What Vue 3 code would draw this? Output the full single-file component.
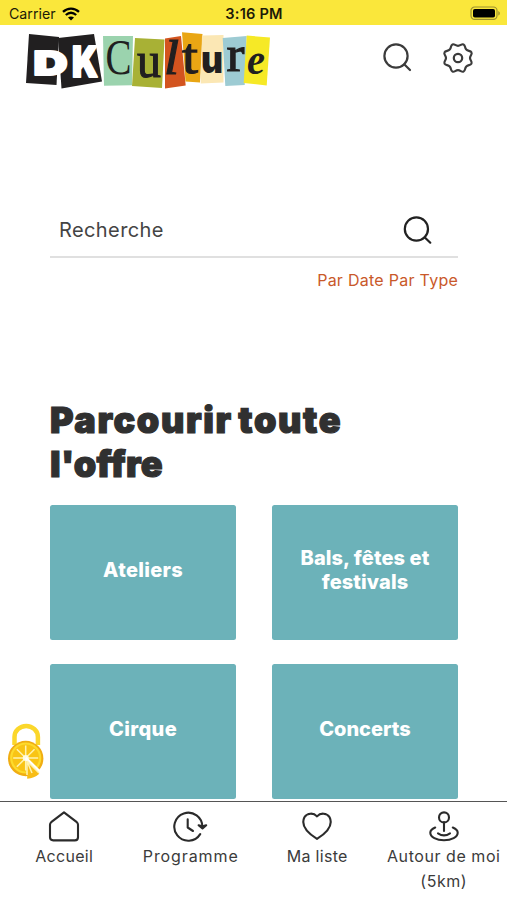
<script setup>
import { ref } from "vue";

const search = ref("");

const categories = [
  { id: 1, label: "Ateliers", cls: "ateliers" },
  { id: 2, label: "Bals, fêtes et festivals", cls: "bals" },
  { id: 3, label: "Cirque", cls: "cirque" },
  { id: 4, label: "Concerts", cls: "concerts" },
];

const tabs = [
  { icon: "home", label: "Accueil" },
  { icon: "clock", label: "Programme" },
  { icon: "heart", label: "Ma liste" },
  { icon: "pin", label: "Autour de moi (5km)" },
];

// citrus segments, in degrees
const segments = [0, 45, 90, 135, 180, 225, 270, 315];
</script>

<template>
  <div class="app">
    <div class="status-bar">
      <div class="carrier">
        <span>Carrier</span>
        <svg width="18" height="14" viewBox="0 0 18 14">
          <path d="M1 4.8C5.6.5 12.4.5 17 4.8" />
          <path d="M3.8 8C7 5.2 11 5.2 14.2 8" />
          <path class="dot" d="M9 13.6L6 10.6C7.8 9.2 10.2 9.2 12 10.6Z" />
        </svg>
      </div>
      <span class="time">3:16 PM</span>
      <svg class="battery" width="31" height="15" viewBox="0 0 31 15">
        <rect class="shell" x="1" y="1" width="26" height="12.4" rx="3.6" />
        <rect x="3" y="3" width="22" height="8.6" rx="1.8" />
        <path class="cap" d="M28.3 5v4.6c2-.8 2-3.8 0-4.6z" />
      </svg>
    </div>

    <header class="header">
      <svg class="logo" width="247" height="65" viewBox="25 25 247 65">
        <path fill="#211f20" d="M29 34L59 37L56.5 85L26 83Z" />
        <path fill="#211f20" d="M58 38L94 34L102 81.5L61.5 88.5Z" />
        <path fill="#9bd3ae" d="M103 36L133 36L132 85.3L104 85.7Z" />
        <path fill="#a8b135" d="M135 38L164.5 39.5L162 88L132 86Z" />
        <path fill="#d3541f" d="M165 38.5L181 36L185.7 85.5L165 88.5Z" />
        <path fill="#e9a614" d="M182 32.3L202.5 34L200 82.5L185.5 81.5Z" />
        <path fill="#fbe7b4" d="M202 35.5L223.5 35L223.5 82.5L200.7 83.5Z" />
        <path fill="#9dcbd3" d="M222.7 38L246.7 36L244.7 85L225.3 86Z" />
        <path fill="#f6e926" d="M246.7 35.5L270 37.5L266.7 85.5L243.7 83Z" />
        <text class="block" x="33.5" y="74.5" font-size="33" textLength="34" lengthAdjust="spacingAndGlyphs">D</text>
        <text class="block" x="72" y="77" font-size="42" textLength="26" lengthAdjust="spacingAndGlyphs">K</text>
        <text class="serif" x="105.5" y="74" font-size="51" textLength="26" lengthAdjust="spacingAndGlyphs">C</text>
        <text class="serif thick" x="137" y="77" font-size="50" textLength="24" lengthAdjust="spacingAndGlyphs">u</text>
        <text class="serif thick italic" x="164" y="73.5" font-size="49" textLength="15" lengthAdjust="spacingAndGlyphs">l</text>
        <text class="serif thick" x="182" y="72.5" font-size="51" textLength="16" lengthAdjust="spacingAndGlyphs">t</text>
        <text class="sans" x="201" y="73" font-size="38" textLength="22" lengthAdjust="spacingAndGlyphs">u</text>
        <text class="serif thick" x="226.5" y="71" font-size="51" textLength="18" lengthAdjust="spacingAndGlyphs">r</text>
        <text class="serif bold italic" x="247" y="74" font-size="45" textLength="18" lengthAdjust="spacingAndGlyphs">e</text>
      </svg>
      <div class="actions">
        <svg width="30" height="30" viewBox="0 0 30 30">
          <circle cx="13" cy="13" r="11.6" />
          <path d="M21.2 21.2L27 27" />
        </svg>
        <svg width="32" height="32" viewBox="0 0 32 32">
          <circle cx="16" cy="16" r="4.2" />
          <path
            d="M10.5 2.4C12.3 1.5 13.5 3.9 16 3.9S19.7 1.5 21.5 2.4C23.6 3.4 22.5 5.7 24.3 7.6C26 9.4 28.5 8.3 29.5 10.4C30.5 12.3 28 13.5 28 16S30.5 19.7 29.5 21.6C28.5 23.7 26 22.6 24.3 24.4C22.5 26.3 23.6 28.6 21.5 29.6C19.7 30.5 18.5 28.1 16 28.1S12.3 30.5 10.5 29.6C8.4 28.6 9.5 26.3 7.7 24.4C6 22.6 3.5 23.7 2.5 21.6C1.5 19.7 4 18.5 4 16S1.5 12.3 2.5 10.4C3.5 8.3 6 9.4 7.7 7.6C9.5 5.7 8.4 3.4 10.5 2.4Z"
          />
        </svg>
      </div>
    </header>

    <main class="content">
      <div class="search-box">
        <input v-model="search" type="text" placeholder="Recherche" />
        <svg width="30" height="30" viewBox="0 0 30 30">
          <circle cx="13.4" cy="14" r="11.6" />
          <path d="M21.6 22.2L27.3 27.7" />
        </svg>
      </div>

      <div class="filters">
        <a>Par Date</a>
        <a>Par Type</a>
      </div>

      <h1><span class="line-one">Parcourir toute</span><br /><span class="line-two">l'offre</span></h1>

      <div class="grid">
        <div v-for="cat in categories" :key="cat.id" class="card">
          <span :class="cat.cls">{{ cat.label }}</span>
        </div>
      </div>
    </main>

    <!-- cookie settings -->
    <svg class="cookie" width="40" height="58" viewBox="0 0 40 58">
      <path class="shackle" d="M7.5 22V14a11.7 11 0 0 1 23.4 0V22" />
      <circle cx="18.7" cy="35.5" r="17.7" fill="#f0ad12" />
      <circle cx="18.7" cy="35" r="15.6" fill="#fddb2c" />
      <circle cx="18.7" cy="35" r="13.4" fill="#f9c414" />
      <path
        v-for="deg in segments"
        :key="deg"
        class="segment"
        d="M18.7 35V22.5"
        :transform="`rotate(${deg} 18.7 35)`"
      />
      <circle cx="18.7" cy="35" r="3" fill="#fffbe0" />
      <path class="cut" d="M18.7 35L34 50" />
      <path d="M20 38L32.3 50.7A19 19 0 0 1 20.2 55.7Z" fill="#f8bd16" />
      <path class="segment" d="M20 38L32 50M20 38V52M20 38L25 50" />
    </svg>

    <nav class="tab-bar">
      <a v-for="tab in tabs" :key="tab.label" class="tab" :class="tab.icon">
        <svg width="36" height="32" viewBox="0 0 36 32">
          <template v-if="tab.icon === 'home'">
            <path
              d="M18 1.3L30.8 11.2Q32 12.2 32 13.7V26.2Q32 29.4 28.8 29.4H7.2Q4 29.4 4 26.2V13.7Q4 12.2 5.2 11.2Z"
            />
          </template>
          <template v-else-if="tab.icon === 'clock'">
            <path d="M27.2 23.1A14 14 0 1 1 29.3 16" />
            <path class="arrow" d="M25.6 14.2L29.5 17.5L33.2 14.2L29.5 15.2Z" />
            <path d="M14.7 8.4V16.5L20 20" />
          </template>
          <template v-else-if="tab.icon === 'heart'">
            <path
              d="M18 5.4C14.5 1.5 8.2 1.8 5.4 6.2C1.8 13.8 8 21.7 18 27.9C28 21.7 34.2 13.8 30.6 6.2C27.8 1.8 21.5 1.5 18 5.4Z"
            />
          </template>
          <template v-else>
            <circle cx="18" cy="6.4" r="5" />
            <path d="M18 11.4V20" />
            <path d="M9.2 16.5C6.4 17.7 4.3 19.4 4.3 21.7C4.3 26 10.5 29.2 18 29.2S31.7 26 31.7 21.7C31.7 19.4 29.6 17.7 26.8 16.5" />
            <path d="M12 22.3Q18 26.4 24 22.3" />
          </template>
        </svg>
        <span>{{ tab.label }}</span>
      </a>
    </nav>
  </div>
</template>

<style>
body {
  margin: 0;
  background: #fff;
}
</style>

<style scoped>
.app {
  position: relative;
  display: flex;
  flex-direction: column;
  height: 900px;
  overflow: hidden;
  background: #fff;
  color: #303030;
  font-family: "Inter", "Open Sans", sans-serif;
}

.status-bar {
  display: grid;
  grid-template-columns: 1fr auto 1fr;
  align-items: center;
  flex: none;
  height: 25px;
  padding: 2px 6px 0 9px;
  box-sizing: border-box;
  background: #fae73b;
  color: #1c1a08;
  font-size: 14.2px;
}

.carrier {
  display: flex;
  align-items: center;
  gap: 6px;
}

.carrier path {
  fill: none;
  stroke: #000;
  stroke-width: 2.3;
}

.carrier .dot {
  fill: #000;
  stroke: none;
}

.time {
  font-size: 14.6px;
  font-weight: 600;
  letter-spacing: 0.2px;
  margin-right: 2px;
}

.battery {
  justify-self: end;
}

.battery .shell {
  fill: none;
  stroke: #9c9130;
  stroke-width: 1.2;
}

.battery .cap {
  fill: #9c9130;
}

.header {
  display: flex;
  justify-content: space-between;
  align-items: flex-start;
  flex: none;
  height: 65px;
  padding: 0 33px 0 25px;
  box-sizing: border-box;
}

.logo text {
  fill: #211f20;
}

.logo .block {
  fill: #fff;
  stroke: #fff;
  stroke-width: 2;
  stroke-linejoin: round;
  font-weight: 900;
}

.logo .serif {
  font-family: "Liberation Serif", serif;
}

.logo .thick {
  stroke: #211f20;
  stroke-width: 1.1;
}

.logo .sans {
  font-family: "Inter", sans-serif;
  font-weight: 900;
}

.logo .bold {
  font-weight: 700;
}

.logo .italic {
  font-style: italic;
}

.actions {
  display: flex;
  align-items: center;
  gap: 29px;
  padding-top: 17px;
}

.actions svg,
.search-box svg {
  fill: none;
  stroke: #3b3b3b;
  stroke-width: 2.2;
  stroke-linecap: round;
  stroke-linejoin: round;
}

.content {
  flex: 1;
  min-height: 0;
  padding: 114px 49px 0 50px;
}

.search-box {
  display: flex;
  align-items: center;
  justify-content: space-between;
  height: 52px;
  padding: 0 25px 0 9px;
  border-bottom: 2px solid #e0e0e0;
}

.search-box input {
  width: 250px;
  padding: 0;
  border: none;
  outline: none;
  background: none;
  font: inherit;
  font-size: 20px;
  letter-spacing: 0.4px;
}

.search-box input::placeholder {
  color: #444;
  opacity: 1;
}

.search-box svg {
  stroke: #222;
}

.filters {
  display: flex;
  justify-content: flex-end;
  gap: 5px;
  padding-top: 9px;
  color: #c9592a;
  font-size: 16px;
  line-height: 26px;
  letter-spacing: 0.25px;
}

h1 {
  margin: 105px 0 19px;
  font-size: 36px;
  font-weight: 900;
  line-height: 44px;
  -webkit-text-stroke: 1.2px #303030;
}

.line-one {
  letter-spacing: 1.6px;
  word-spacing: -3px;
}

.line-two {
  letter-spacing: 0.3px;
}

.grid {
  display: grid;
  grid-template-columns: 186px 186px;
  grid-auto-rows: 134.5px;
  gap: 24.5px 36px;
}

.card {
  display: flex;
  align-items: center;
  justify-content: center;
  padding: 0 20px 4px;
  border-radius: 2.5px;
  box-sizing: border-box;
  background: #6cb2b9;
  color: #fff;
  font-size: 20px;
  font-weight: 800;
  line-height: 24.5px;
  text-align: center;
}

.card .ateliers {
  letter-spacing: 0.3px;
}

.card .bals {
  letter-spacing: 0.1px;
}

.card .cirque {
  letter-spacing: 0.4px;
}

.cookie {
  position: absolute;
  left: 7px;
  top: 722.5px;
}

.cookie .shackle {
  fill: none;
  stroke: #fbd72b;
  stroke-width: 4.5;
}

.cookie .segment {
  fill: none;
  stroke: #fff3ae;
  stroke-width: 1.5;
}

.cookie .cut {
  stroke: #fff;
  stroke-width: 3;
}

.tab-bar {
  display: grid;
  grid-template-columns: repeat(4, 1fr);
  flex: none;
  height: 99px;
  padding-left: 1px;
  border-top: 1.5px solid #555;
  box-sizing: border-box;
  background: #fff;
}

.tab {
  display: flex;
  flex-direction: column;
  align-items: center;
  padding-top: 9px;
  font-size: 16px;
  line-height: 24.5px;
  letter-spacing: 0.3px;
  text-align: center;
}

.tab.clock {
  letter-spacing: 0.9px;
}

.tab.pin {
  letter-spacing: 0.55px;
}

.tab svg {
  flex: none;
  fill: none;
  stroke: #2b2b2b;
  stroke-width: 2.1;
  stroke-linecap: round;
  stroke-linejoin: round;
}

.tab .arrow {
  fill: #2b2b2b;
}

.tab span {
  margin-top: 1px;
  color: #3b3b3b;
}
</style>
